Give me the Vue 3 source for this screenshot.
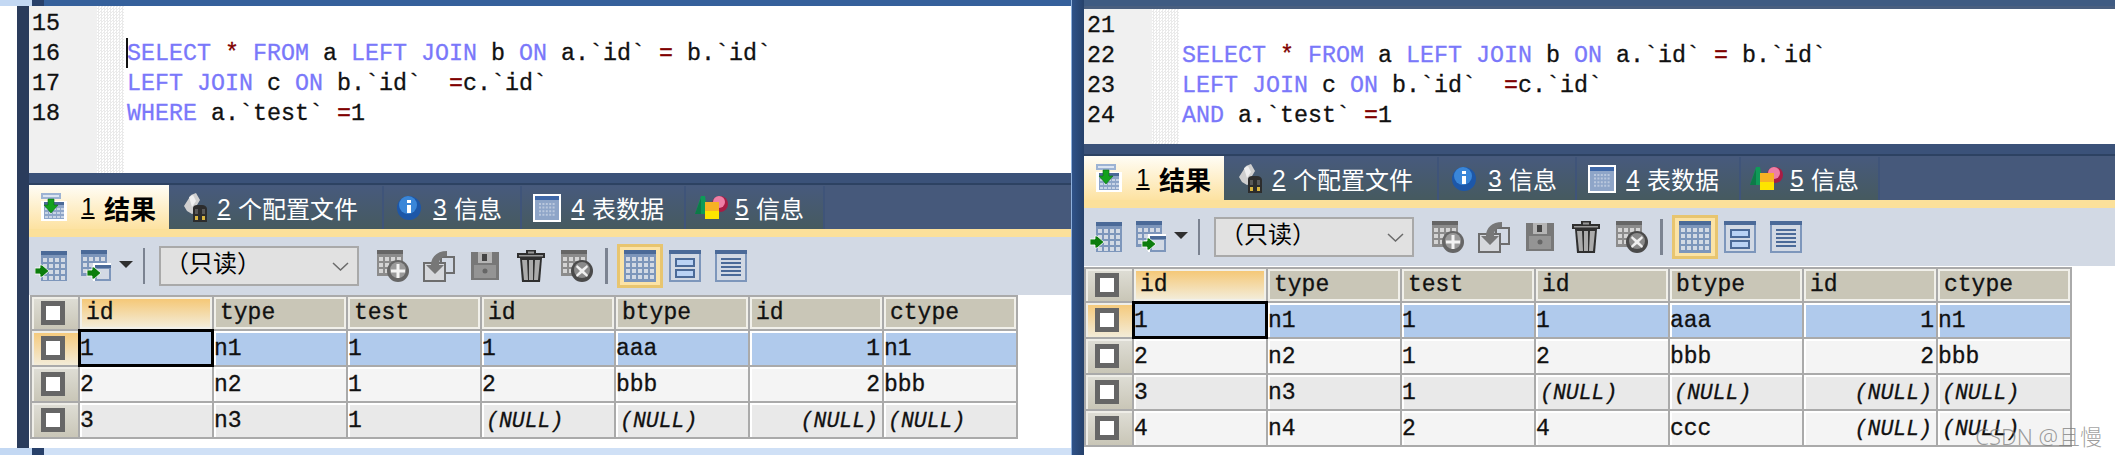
<script setup>
const cells = (x, y, c, r, w, h, sx, sy) => {
  let d = ''
  for (let i = 0; i < r; i++) for (let j = 0; j < c; j++) d += `M${x + j * sx} ${y + i * sy}h${w}v${h}h${-w}z`
  return d
}
const toolbarCells = cells(2, 7, 4, 4, 4, 4, 6, 6)
const bigCells = cells(2, 7, 5, 4, 4, 4, 6, 6)
const tabCells = cells(6, 9, 5, 4, 2, 2, 3.4, 3.6)
const resultCells = cells(4, 15, 5, 3, 3, 2, 4, 4)

const kw = (t) => ({ t, c: 'kw' })
const op = (t) => ({ t, c: 'op' })
const tx = (t) => ({ t, c: '' })
const sp = tx(' ')
const firstLine = [kw('SELECT'), sp, op('*'), sp, kw('FROM'), tx(' a '), kw('LEFT'), sp, kw('JOIN'), tx(' b '), kw('ON'), tx(' a.`id` '), op('='), tx(' b.`id`')]
const secondLine = [kw('LEFT'), sp, kw('JOIN'), tx(' c '), kw('ON'), tx(' b.`id`  '), op('='), tx('c.`id`')]

const N = null
const panes = [
  {
    key: 'left',
    nums: [15, 16, 17, 18],
    code: [[], firstLine, secondLine, [kw('WHERE'), tx(' a.`test` '), op('='), tx('1')]],
    rows: [
      ['1', 'n1', '1', '1', 'aaa', '1', 'n1'],
      ['2', 'n2', '1', '2', 'bbb', '2', 'bbb'],
      ['3', 'n3', '1', N, N, N, N],
    ],
  },
  {
    key: 'right',
    nums: [21, 22, 23, 24],
    code: [[], firstLine, secondLine, [kw('AND'), tx(' a.`test` '), op('='), tx('1')]],
    rows: [
      ['1', 'n1', '1', '1', 'aaa', '1', 'n1'],
      ['2', 'n2', '1', '2', 'bbb', '2', 'bbb'],
      ['3', 'n3', '1', N, N, N, N],
      ['4', 'n4', '2', '4', 'ccc', N, N],
    ],
  },
]
const heads = ['id', 'type', 'test', 'id', 'btype', 'id', 'ctype']
</script>

<template>
  <div class="shot">
    <template v-for="(pane, pi) in panes" :key="pane.key">
      <div v-if="pi === 1" class="divider"></div>
      <section class="pane" :class="`pane-${pane.key}`">
        <div class="top-strip"></div>
        <div class="pane-body">
          <div class="side-bar"></div>
          <div class="main">
            <div class="editor">
              <div class="gutter">
                <div v-for="n in pane.nums" :key="n" class="line">{{ n }}</div>
              </div>
              <div class="dots"></div>
              <div class="code">
                <div v-for="(l, li) in pane.code" :key="li" class="line" :class="{ caret: pi === 0 && li === 1 }">
                  <span v-for="(tok, ti) in l" :key="ti" :class="tok.c">{{ tok.t }}</span>
                </div>
              </div>
            </div>

            <div class="bar"></div>

            <div class="tabs">
              <div class="tab tab-1 active">
                <svg width="26" height="28" viewBox="0 0 26 28">
                  <path d="M0 0h20v6H0z" fill="#9db3d3" />
                  <path d="M2 2h16v2H2z" fill="#dbe4f1" />
                  <path d="M0 8h26v20H0z" fill="#fff" />
                  <path d="M3 9h20v17H3z" fill="#8ea5c8" />
                  <path d="M3 9h20v3H3z" fill="#4b6a98" />
                  <path :d="resultCells" fill="#c8d4e6" />
                  <path d="M7 6h6v6h4l-7 8-7-8h4z" fill="#13a11d" stroke="#0a6b10" stroke-width=".6" />
                </svg>
                <u class="digit">1</u><span class="label">结果</span>
              </div>
              <div class="tab tab-2">
                <svg width="25" height="29" viewBox="0 0 25 29">
                  <path d="M1 13 8 2l5-2 4 7-3 5 3 6-8 3-5-3z" fill="#cfcfcf" />
                  <path d="M6 4l4-2 3 6-4 6z" fill="#efefef" />
                  <path d="M10 15c0-2 2-3 4-3h5c3 0 5 2 5 4v13H10z" fill="#2c2c2c" />
                  <path d="M12 16h3v5h-3zM19 16h3v5h-3z" fill="#585858" />
                  <path d="M12 23h3v4h-3zM19 23h3v4h-3z" fill="#d8b540" />
                </svg>
                <u class="digit">2</u><span class="label">个配置文件</span>
              </div>
              <div class="tab tab-3">
                <svg width="24" height="24" viewBox="0 0 24 24">
                  <circle cx="12" cy="12" r="12" fill="#1d57a8" />
                  <circle cx="11" cy="9" r="9" fill="#3a86d8" />
                  <path d="M10 4h4v3h-4zM10 9h4v8h-4z" fill="#fff" />
                </svg>
                <u class="digit">3</u><span class="label">信息</span>
              </div>
              <div class="tab tab-4">
                <svg width="28" height="28" viewBox="0 0 28 28">
                  <path d="M0 0h28v28H0z" fill="#fff" />
                  <path d="M2 2h24v24H2z" fill="#8ea5c8" />
                  <path d="M2 2h24v4H2z" fill="#3f68a8" />
                  <path :d="tabCells" fill="#b9c7dd" />
                </svg>
                <u class="digit">4</u><span class="label">表数据</span>
              </div>
              <div class="tab tab-5">
                <svg width="33" height="23" viewBox="0 0 33 23">
                  <path d="M0 18 6 0l4 0 3 18z" fill="#0f9a58" />
                  <path d="M0 18 6 2v16z" fill="#0d7a48" />
                  <circle cx="25" cy="8" r="8" fill="#a81c44" />
                  <circle cx="24" cy="6" r="6" fill="#ee7fa5" />
                  <path d="M10 6h14v14H10z" fill="#f7b224" />
                  <path d="M10 15h14v8H10z" fill="#fde500" />
                </svg>
                <u class="digit">5</u><span class="label">信息</span>
              </div>
            </div>
            <div class="tab-rule"></div>

            <div class="toolbar">
              <svg class="t-import" width="32" height="30" viewBox="0 0 32 30">
                <g transform="translate(6 0)">
                  <path d="M0 0h26v30H0z" fill="#7d96bb" />
                  <path d="M0 0h26v4H0z" fill="#4b6a98" />
                  <path :d="toolbarCells" fill="#d2d9e4" />
                </g>
                <path d="M5 14h2l7 6-7 6H5v-3H0v-6h5z" fill="#0c7d0c" stroke="#fff" stroke-width=".8" />
              </svg>
              <svg class="t-export" width="30" height="32" viewBox="0 0 30 32">
                <path d="M0 0h26v26H0z" fill="#7d96bb" />
                <path d="M0 0h26v4H0z" fill="#4b6a98" />
                <path :d="cells(2, 7, 4, 3, 4, 4, 6, 6)" fill="#d2d9e4" />
                <path d="M12 13h18v18H12z" fill="#fff" />
                <path d="M14 15h16v16H14z" fill="#7d96bb" />
                <path d="M14 15h16v3H14z" fill="#4b6a98" />
                <path d="M16 19h12v10H16z" fill="#d2d9e4" />
                <path d="M11 17h2l7 6-7 6h-2v-3H6v-6h5z" fill="#0c7d0c" stroke="#fff" stroke-width=".8" />
              </svg>
              <svg class="t-drop" width="14" height="7" viewBox="0 0 14 7"><path d="M0 0h14L7 7z" fill="#2f2f2f" /></svg>
              <i class="sep sep-a"></i>
              <div class="select">
                <span class="select-text">（只读）</span>
                <svg width="17" height="9" viewBox="0 0 17 9"><path d="M1 1l7.500 7L16 1" fill="none" stroke="#6b6b6b" stroke-width="1.500" /></svg>
              </div>
              <svg class="t-add" width="32" height="32" viewBox="0 0 32 32">
                <path d="M0 0h26v26H0z" fill="#8c8c8c" />
                <path d="M0 0h26v4H0z" fill="#666" />
                <path :d="cells(2, 7, 4, 3, 4, 4, 6, 6)" fill="#d4d4d4" />
                <circle cx="21" cy="21" r="11" fill="#666" />
                <circle cx="21" cy="20" r="8" fill="#9a9a9a" />
                <path d="M19.500 14h3v5.500H28v3h-5.500V28h-3v-5.500H14v-3h5.500z" fill="#f3f3f3" />
              </svg>
              <svg class="t-undo" width="32" height="32" viewBox="0 0 32 32">
                <path d="M18 7h13v16H18z" fill="#d2d9e4" stroke="#6d6d6d" stroke-width="2" />
                <path d="M1 13h21v18H1z" fill="#d6d8dc" stroke="#6d6d6d" stroke-width="2" />
                <path d="M8 15C8 7 14 1 24 1v5c-5 0-8 3-8 9h5l-9 9-9-9z" fill="#777" />
              </svg>
              <svg class="t-save" width="28" height="28" viewBox="0 0 28 28">
                <path d="M0 0h28v28H0z" fill="#787878" />
                <path d="M7 0h14v11H7z" fill="#b5b5b5" />
                <path d="M11 2h5v7h-5z" fill="#444" />
                <path d="M3 13h22v13H3z" fill="#949494" />
                <circle cx="14" cy="19" r="2.500" fill="#666" />
              </svg>
              <svg class="t-trash" width="28" height="32" viewBox="0 0 28 32">
                <path d="M9 3V0h10v3h9v5H0V3z" fill="#2f2f2f" />
                <path d="M11 1.500h6v2h-6z" fill="#999" />
                <path d="M2 5h24v1.500H2z" fill="#999" />
                <path d="M3 8h22l-2 24H5z" fill="#2f2f2f" />
                <path d="M5 10h5l1 20H7zM12 10h4v20h-4zM18 10h5l-2 20h-4z" fill="#ababab" />
              </svg>
              <svg class="t-cancel" width="32" height="32" viewBox="0 0 32 32">
                <path d="M0 0h26v26H0z" fill="#8c8c8c" />
                <path d="M0 0h26v4H0z" fill="#666" />
                <path :d="cells(2, 7, 4, 3, 4, 4, 6, 6)" fill="#d4d4d4" />
                <circle cx="21" cy="21" r="11" fill="#4a4a4a" />
                <circle cx="21" cy="20" r="8" fill="#8a8a8a" />
                <path d="M16 15l5 4 5-4 1 2-4 4 4 4-1 2-5-4-5 4-1-2 4-4-4-4z" fill="#f0f0f0" />
              </svg>
              <i class="sep sep-b"></i>
              <div class="view-active">
                <svg width="32" height="32" viewBox="0 0 32 32">
                  <path d="M0 0h32v32H0z" fill="#7d96bb" />
                  <path d="M0 0h32v4H0z" fill="#4b6a98" />
                  <path :d="bigCells" fill="#d2d9e4" />
                </svg>
              </div>
              <svg class="t-form" width="32" height="32" viewBox="0 0 32 32">
                <path d="M0 0h32v32H0z" fill="#7d96bb" />
                <path d="M0 0h32v4H0z" fill="#4b6a98" />
                <path d="M2 4h28v26H2z" fill="#d2d9e4" />
                <path d="M6 8h20v9H6zM6 19h20v9H6z" fill="#4b6a98" />
                <path d="M8 10h16v5H8zM8 21h16v5H8z" fill="#bad3f5" />
              </svg>
              <svg class="t-text" width="32" height="32" viewBox="0 0 32 32">
                <path d="M0 0h32v32H0z" fill="#7d96bb" />
                <path d="M0 0h32v4H0z" fill="#4b6a98" />
                <path d="M2 4h28v26H2z" fill="#d2d9e4" />
                <path d="M6 8h20v2H6zM6 12h20v2H6zM6 16h20v2H6zM6 20h20v2H6zM6 24h20v2H6z" fill="#4b6a98" />
              </svg>
            </div>

            <div class="grid">
              <div class="rowhead"><b class="check"></b></div>
              <div v-for="(h, hi) in heads" :key="hi" class="head" :class="{ current: hi === 0 }">{{ h }}</div>
              <template v-for="(row, ri) in pane.rows" :key="ri">
                <div class="rowhead" :class="{ current: ri === 0 }"><b class="check"></b></div>
                <div
                  v-for="(c, ci) in row"
                  :key="ci"
                  class="cell"
                  :class="[
                    ri === 0 ? 'sel' : ri % 2 ? 'even' : 'odd',
                    { focus: ri === 0 && ci === 0, num: ci === 5, nul: c === null },
                  ]"
                >{{ c === null ? '(NULL)' : c }}</div>
              </template>
            </div>
          </div>
        </div>
        <div class="bottom-strip"></div>
      </section>
    </template>
    <div class="mark">CSDN @且慢</div>
  </div>
</template>

<style scoped>
.shot {
  position: relative;
  display: flex;
  width: 2115px;
  height: 455px;
  overflow: hidden;
  background: #fff;
  font-family: "Liberation Mono", monospace;
  color: #111;
}
.pane { display: flex; flex-direction: column; height: 455px; }
.pane-left { width: 1071px; flex: none; }
.pane-right { flex: 1; min-width: 0; }
.divider {
  width: 13px;
  flex: none;
  background: linear-gradient(90deg, #8fb0dc 0 1px, #2f5288 1px, #26416a);
}

.top-strip { flex: none; }
.pane-left .top-strip {
  height: 6px;
  background: linear-gradient(90deg, #c3d8f3 0 32px, #27406a 32px 44px, #35609b 44px);
}
.pane-right .top-strip { height: 9px; background: linear-gradient(#3f5b82 0 6px, #4a5f7f 6px); }

.pane-body { flex: 1; display: flex; min-height: 0; }
.pane-left .pane-body { padding-left: 17px; }
.side-bar { width: 12px; flex: none; background: #2a3c5c; }
.pane-right .side-bar { display: none; }
.main { flex: 1; min-width: 0; display: flex; flex-direction: column; }
.bottom-strip { flex: none; }
.pane-left .bottom-strip {
  height: 7px;
  background: linear-gradient(90deg, #c3d8f3 0 32px, #27406a 32px 44px, #cfe0f6 44px);
}

.editor { display: flex; flex: none; background: #fff; font-size: 23.33px; }
.pane-left .editor { height: 167px; }
.pane-right .editor { height: 135px; }
.gutter { width: 68px; flex: none; padding-left: 3px; box-sizing: border-box; background: #f0f0f0; color: #111; }
.pane-left .gutter, .pane-left .code { padding-top: 3px; }
.pane-right .gutter, .pane-right .code { padding-top: 2px; }
.dots {
  width: 27px;
  flex: none;
  background: repeating-conic-gradient(#eaeaea 0 25%, #fff 0 50%) 0 0 / 3px 3px;
}
.code { padding-left: 3px; flex: 1; min-width: 0; }
.line {
  position: relative;
  height: 30px;
  line-height: 30px;
  white-space: pre;
  -webkit-text-stroke: 0.3px currentColor;
}
.caret::before {
  content: "";
  position: absolute;
  left: -1px;
  top: -1px;
  width: 2px;
  height: 30px;
  background: #111;
}
.kw { color: #7a78fa; }
.op { color: #800000; }

.bar { flex: none; height: 12px; background: linear-gradient(#3b5279 0 10px, #2d4262 10px); }

.tabs {
  flex: none;
  display: flex;
  height: 44px;
  background: #46597b;
  color: #fff;
  font-family: "Liberation Sans", "Noto Sans CJK SC", sans-serif;
  font-size: 24px;
}
.tab {
  display: flex;
  align-items: center;
  flex: none;
  box-sizing: border-box;
  margin-top: 1px;
  background: linear-gradient(#475a7d, #465a5f);
  border-right: 2px solid #3f5479;
}
.tab-1 { width: 140px; padding-left: 12px; }
.tab-2 { width: 215px; padding-left: 14px; }
.tab-3 { width: 138px; padding-left: 13px; }
.tab-4 { width: 164px; padding-left: 11px; }
.tab-5 { width: 139px; padding-left: 9px; }
.tab.active {
  margin-top: 0;
  color: #000;
  font-weight: 700;
  border-right: 0;
  background: linear-gradient(#fffdf6, #fde2a1);
}
.tab.active .label { font-size: 26px; margin-left: 9px; }
.digit {
  display: block;
  width: 14px;
  line-height: 30px;
  text-align: center;
  font-weight: 400;
  text-decoration-thickness: 2px;
  text-underline-offset: 2px;
  margin-left: 9px;
}
.tab-1 .digit { margin-left: 14px; }
.tab-5 .digit { margin-left: 7px; }
.tab-4 .digit { margin-left: 10px; }
.tab-3 .digit { margin-left: 12px; }
.label { margin-left: 7px; white-space: nowrap; }
.tab-rule { flex: none; height: 8px; background: #fbe09a; }

.toolbar {
  flex: none;
  display: flex;
  align-items: center;
  height: 58px;
  padding-left: 6px;
  background: #d2d9e4;
}
.toolbar > * { flex: none; }
.t-export { margin-left: 14px; }
.t-drop { margin-left: 8px; margin-bottom: 4px; }
.sep { display: block; width: 2px; height: 36px; background: #7b8391; }
.sep-a { margin-left: 10px; }
.select {
  display: flex;
  align-items: center;
  justify-content: space-between;
  width: 200px;
  height: 40px;
  margin-left: 14px;
  padding: 0 8px 0 4px;
  box-sizing: border-box;
  border: 2px solid #a9a9a9;
  background: #e1e1e1;
  color: #000;
  font-family: "Noto Sans CJK SC", sans-serif;
  font-size: 24px;
}
.select-text { line-height: 28px; margin-bottom: 8px; }
.t-add { margin-left: 18px; }
.t-undo { margin-left: 14px; }
.t-save { margin-left: 16px; }
.t-trash { margin-left: 18px; }
.t-cancel { margin-left: 16px; }
.sep-b { margin-left: 12px; width: 3px; }
.view-active {
  display: flex;
  align-items: center;
  justify-content: center;
  width: 46px;
  height: 44px;
  margin-left: 9px;
  box-sizing: border-box;
  border: 3px solid #e8c56f;
  background: #fbe3a6;
}
.t-form { margin-left: 6px; }
.t-text { margin-left: 14px; }

.grid {
  flex: none;
  display: grid;
  grid-template-columns: 46px repeat(7, 132px);
  grid-auto-rows: 34px;
  grid-template-rows: 32px;
  gap: 2px;
  width: max-content;
  margin-left: 1px;
  padding: 2px;
  background: #aaa;
  font-size: 23px;
}
.pane-right .grid { margin-top: 1px; margin-left: 0; }
.rowhead {
  display: flex;
  align-items: center;
  justify-content: center;
  padding-right: 4px;
  box-sizing: border-box;
  background: linear-gradient(#dfded6, #c9c6b7);
  box-shadow: inset 2px 2px 0 #efeee8;
}
.rowhead.current { background: linear-gradient(#f5c877, #f3ecd8); }
.check {
  display: block;
  width: 24px;
  height: 24px;
  box-sizing: border-box;
  border: 5px solid #666;
  background: #fff;
}
.head {
  padding-left: 4px;
  line-height: 29px;
  border: 2px solid #f1f0ea;
  box-sizing: border-box;
  background: #c9c6b7;
  -webkit-text-stroke: 0.3px currentColor;
}
.head.current { background: linear-gradient(#f5c877, #f3ecd8); }
.cell {
  position: relative;
  padding: 0 2px 0 0;
  line-height: 36px;
  white-space: pre;
  box-shadow: inset 2px 2px 0 #fff;
  -webkit-text-stroke: 0.3px currentColor;
}
.sel { background: #b0caec; }
.even { background: #f4f4f4; }
.odd { background: #e9e9e9; }
.num { text-align: right; }
.nul { font-style: italic; font-size: 21.5px; padding-left: 4px; padding-right: 4px; }
.focus { outline: 3px solid #000; outline-offset: -1px; z-index: 1; box-shadow: none; }

.mark {
  position: absolute;
  right: 13px;
  bottom: 7px;
  color: rgba(120, 120, 120, 0.72);
  font-family: "Noto Sans", "Noto Sans CJK SC", sans-serif;
  font-size: 22px;
  font-weight: 300;
  line-height: 24px;
  white-space: nowrap;
}
</style>
